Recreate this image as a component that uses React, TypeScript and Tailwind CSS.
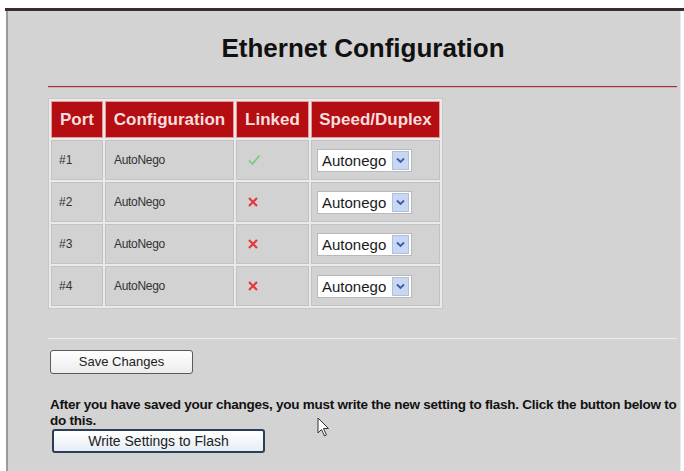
import React from "react";

type Row = { port: string; cfg: string; linked: boolean };

const rows: Row[] = [
  { port: "#1", cfg: "AutoNego", linked: true },
  { port: "#2", cfg: "AutoNego", linked: false },
  { port: "#3", cfg: "AutoNego", linked: false },
  { port: "#4", cfg: "AutoNego", linked: false },
];

function Check() {
  return (
    <svg width="14" height="14" viewBox="0 0 14 14">
      <path d="M2 7.5 L5.5 11 L12.5 2.5" fill="none" stroke="#78c878" strokeWidth="1.6" />
    </svg>
  );
}

function Cross() {
  return (
    <svg width="12" height="12" viewBox="0 0 12 12">
      <path d="M2 2 L10 10 M10 2 L2 10" fill="none" stroke="#e23b3b" strokeWidth="2.2" />
    </svg>
  );
}

function FakeSelect() {
  return (
    <div className="flex items-center w-[95px] h-[23px] bg-white border border-[#b8b8b8]">
      <span className="flex-1 pl-[4px] text-[15px] leading-none text-[#1a1a1a]" style={{ fontFamily: "'Liberation Sans', Arial, sans-serif" }}>
        Autonego
      </span>
      <span className="w-[17px] h-[19px] mr-[2px] bg-[#c9d8f2] border border-[#aebfe0] flex items-center justify-center">
        <svg width="9" height="7" viewBox="0 0 9 7">
          <path d="M1 1.5 L4.5 5 L8 1.5" fill="none" stroke="#3a5aa8" strokeWidth="1.8" />
        </svg>
      </span>
    </div>
  );
}

function Cursor() {
  return (
    <svg width="14" height="21" viewBox="0 0 14 21">
      <path d="M1 1 L1 16 L4.5 12.5 L7.5 19 L9.5 18 L6.5 11.5 L11.5 11.5 Z" fill="#ffffff" stroke="#333" strokeWidth="1" strokeLinejoin="round" />
    </svg>
  );
}

export default function App() {
  const sans = { fontFamily: "'Liberation Sans', Arial, sans-serif" };
  return (
    <div className="w-[684px] h-[471px] bg-white overflow-hidden relative" style={sans}>
      <div className="h-[8px] bg-white" />
      <div className="ml-[5px] h-[3px] bg-[#3b2b2d]" />
      <div className="ml-[6px] mr-[3px] h-[460px] bg-[#d3d3d3] border-l-[2px] border-l-[#9a9a9a] border-r border-r-[#e8e8e8] flex flex-col">
        <h1 className="mt-[22px] text-center text-[26px] font-bold text-[#111] leading-[30px] pl-[38px]">
          Ethernet Configuration
        </h1>
        <div className="mt-[23px] ml-[40px] mr-[3px] h-[2px] bg-[#8a3a40] border-b border-b-[#e0a8a8]" />

        <table className="mt-[10px] ml-[40px] w-[395px] border-separate border-spacing-[2px] bg-[#eaeaea] border border-[#c8c8c8]">
          <thead>
            <tr>
              {[
                ["Port", "w-[52px]"],
                ["Configuration", "w-[129px]"],
                ["Linked", "w-[73px]"],
                ["Speed/Duplex", ""],
              ].map(([label, w]) => (
                <th
                  key={label}
                  className={`${w} h-[37px] bg-[#b40d12] text-[#f8dede] text-[17px] font-bold text-center border border-[#e49a9a] px-[2px]`}
                >
                  {label}
                </th>
              ))}
            </tr>
          </thead>
          <tbody>
            {rows.map((r) => (
              <tr key={r.port}>
                <td className="h-[40px] bg-[#d2d2d2] border border-[#c2c2c2] pl-[7px] text-[12px] text-[#333]">{r.port}</td>
                <td className="h-[40px] bg-[#d2d2d2] border border-[#c2c2c2] pl-[8px] text-[12px] text-[#333] tracking-[-0.3px]">{r.cfg}</td>
                <td className="h-[40px] bg-[#d2d2d2] border border-[#c2c2c2] pl-[10px]">
                  {r.linked ? <Check /> : <Cross />}
                </td>
                <td className="h-[40px] bg-[#d2d2d2] border border-[#c2c2c2] pl-[5px]">
                  <FakeSelect />
                </td>
              </tr>
            ))}
          </tbody>
        </table>

        <div className="mt-[29px] ml-[40px] mr-[3px] h-[1px] bg-[#a9a9a9] border-b border-b-[#ececec]" />

        <div className="mt-[10px] ml-[42px]">
          <button className="w-[143px] h-[24px] rounded-[3px] border border-[#5a5a5a] bg-gradient-to-b from-white to-[#ececec] text-[13px] text-[#222]">
            Save Changes
          </button>
        </div>

        <p className="mt-[23px] ml-[42px] text-[13.5px] font-bold text-[#111] leading-[16px] tracking-[-0.25px] pr-[2px]">
          After you have saved your changes, you must write the new setting to flash. Click the button below to do this.
        </p>

        <div className="ml-[44px]">
          <button className="w-[213px] h-[24px] rounded-[3px] border-[2px] border-[#2c3e55] bg-gradient-to-b from-white to-[#e6edf5] text-[14px] text-[#222]">
            Write Settings to Flash
          </button>
        </div>
      </div>

      <div className="absolute left-[317px] top-[417px]">
        <Cursor />
      </div>
    </div>
  );
}
